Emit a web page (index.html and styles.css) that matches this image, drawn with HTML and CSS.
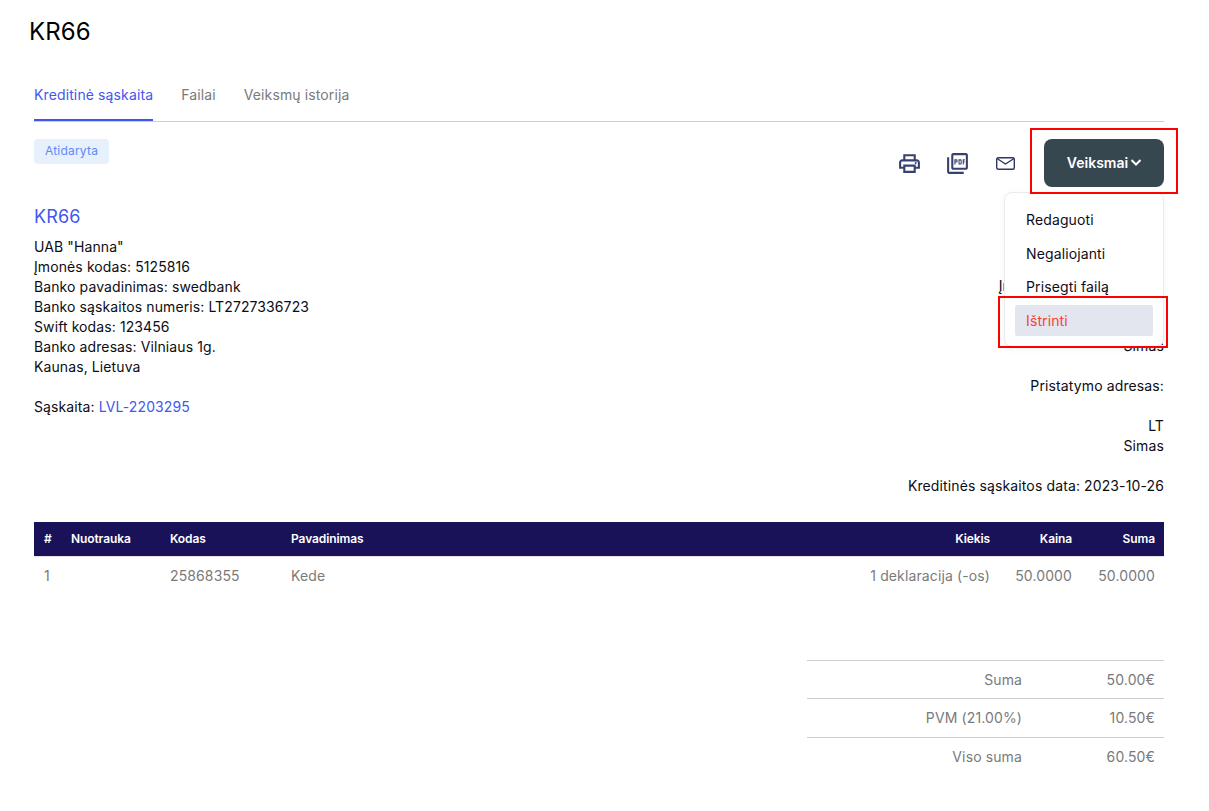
FILE: index.html
```html
<!DOCTYPE html>
<html lang="lt">
<head>
<meta charset="utf-8">
<title>KR66</title>
<link rel="stylesheet" href="styles.css">
</head>
<body>
<h1 class="page-title">KR66</h1>
<main class="content">
  <nav class="tabs">
    <a class="tab tab-active">Kreditinė sąskaita</a>
    <a class="tab">Failai</a>
    <a class="tab">Veiksmų istorija</a>
  </nav>

  <div class="toolbar">
    <span class="badge">Atidaryta</span>
    <div class="actions">
      <svg class="icon" viewBox="0 0 24 24"><path d="M19 8h-1V3H6v5H5c-1.66 0-3 1.34-3 3v6h4v4h12v-4h4v-6c0-1.66-1.34-3-3-3zM8 5h8v3H8V5zm8 12v2H8v-4h8v2zm2-2v-2H6v2H4v-4c0-.55.45-1 1-1h14c.55 0 1 .45 1 1v4h-2z"/><circle cx="18" cy="11.5" r="1"/></svg>
      <svg class="icon" viewBox="0 0 24 24"><path d="M20 2H8c-1.1 0-2 .9-2 2v12c0 1.1.9 2 2 2h12c1.1 0 2-.9 2-2V4c0-1.1-.9-2-2-2zm0 14H8V4h12v12zM4 6H2v14c0 1.1.9 2 2 2h14v-2H4V6zm12 6V9c0-.55-.45-1-1-1h-2v5h2c.55 0 1-.45 1-1zm-2-3h1v3h-1V9zm4 2h1v-1h-1V9h1V8h-2v5h1v-2zm-8 0h1c.55 0 1-.45 1-1V9c0-.55-.45-1-1-1H9v5h1v-2zm0-2h1v1h-1V9z"/></svg>
      <svg class="icon-mail" viewBox="0 0 19 13"><rect x=".7" y=".7" width="17.6" height="11.6" rx="1.5"/><path d="M1 1.500l8.500 5.500L18 1.500"/></svg>
      <div class="menu-anchor">
        <button class="menu-button" type="button">Veiksmai<svg class="chevron" viewBox="0 0 14 14"><path d="M2.500 4l4.500 4.500L11.500 4"/></svg></button>
        <span class="callout callout-button"></span>
        <div class="menu">
          <a class="menu-item">Redaguoti</a>
          <a class="menu-item">Negaliojanti</a>
          <a class="menu-item">Prisegti failą</a>
          <a class="menu-item menu-item-danger">Ištrinti</a>
        </div>
        <span class="callout callout-delete"></span>
      </div>
    </div>
  </div>

  <section class="details">
    <div class="seller">
      <h2 class="doc-number">KR66</h2>
      <p class="lines">UAB "Hanna"<br>Įmonės kodas: 5125816<br>Banko pavadinimas: swedbank<br>Banko sąskaitos numeris: LT2727336723<br>Swift kodas: 123456<br>Banko adresas: Vilniaus 1g.<br>Kaunas, Lietuva<br><br>Sąskaita: <a class="link">LVL-2203295</a></p>
    </div>
    <div class="buyer">
      <p class="lines">Įmonės kodas: 511581611<br><br><br>Simas<br><br>Pristatymo adresas:<br><br>LT<br>Simas<br><br>Kreditinės sąskaitos data: 2023-10-26</p>
    </div>
  </section>

  <table class="items">
    <colgroup>
      <col class="col-num"><col class="col-photo"><col class="col-code"><col><col class="col-qty"><col class="col-price"><col class="col-sum">
    </colgroup>
    <thead>
      <tr><th>#</th><th>Nuotrauka</th><th>Kodas</th><th>Pavadinimas</th><th class="num">Kiekis</th><th class="num">Kaina</th><th class="num">Suma</th></tr>
    </thead>
    <tbody>
      <tr><td>1</td><td></td><td>25868355</td><td>Kede</td><td class="num">1 deklaracija (-os)</td><td class="num">50.0000</td><td class="num">50.0000</td></tr>
    </tbody>
  </table>

  <table class="totals">
    <colgroup><col><col class="col-total"></colgroup>
    <tbody>
      <tr><td>Suma</td><td>50.00€</td></tr>
      <tr><td>PVM (21.00%)</td><td>10.50€</td></tr>
      <tr><td>Viso suma</td><td>60.50€</td></tr>
    </tbody>
  </table>
</main>
</body>
</html>
```

FILE: styles.css
```css
* { box-sizing: border-box; }
html, body { margin: 0; padding: 0; background: #fff; }
body {
  font-family: Inter, "Liberation Sans", sans-serif;
  font-size: 14px;
  line-height: 20px;
  letter-spacing: .12px;
  color: #0d0d14;
}
.page-title {
  margin: 0;
  padding: 17px 0 0 29px;
  font-size: 24px;
  line-height: 30px;
  font-weight: 400;
  color: #000;
}
.content { margin: 0 45px 0 34px; }
.tabs {
  display: flex;
  gap: 28px;
  margin-top: 26px;
  border-bottom: 1px solid #cfcfcf;
}
.tab {
  display: block;
  height: 48px;
  padding-top: 12px;
  color: #7a7a7a;
  font-weight: 400;
}
.tab-active {
  color: #4258ee;
  border-bottom: 2px solid #3f56ee;
  margin-bottom: -1px;
}
.toolbar {
  display: flex;
  justify-content: space-between;
  align-items: flex-start;
  padding-top: 17px;
}
.badge {
  display: block;
  height: 25px;
  padding: 3px 11px;
  border-radius: 4px;
  background: #e7f0fd;
  color: #5f8af7;
  font-size: 12px;
  line-height: 18px;
  letter-spacing: .2px;
}
.actions {
  display: flex;
  align-items: center;
  gap: 23px;
}
.icon { width: 25px; height: 25px; fill: #37406f; display: block; }
.icon-mail {
  display: block;
  width: 19px;
  height: 13px;
  margin: 0 3px;
  fill: none;
  stroke: #2b3566;
  stroke-width: 1.4;
}
.menu-anchor { position: relative; margin-left: 3px; }
.menu-button {
  display: flex;
  align-items: center;
  justify-content: center;
  gap: 1px;
  width: 120px;
  height: 48px;
  padding: 0 0 0 2px;
  border: 0;
  border-radius: 8px;
  background: #37474f;
  color: #fff;
  font: 600 14px/20px Inter, "Liberation Sans", sans-serif;
}
.chevron { width: 14px; height: 14px; fill: none; stroke: #fff; stroke-width: 2; }
.menu {
  position: absolute;
  z-index: 2;
  top: 53px;
  right: 0;
  width: 160px;
  height: 155px;
  padding: 11px 10px;
  background: #fff;
  border: 1px solid #e9ecef;
  border-radius: 8px;
  box-shadow: 0 2px 8px rgba(0, 0, 0, .05);
}
.menu-item {
  display: block;
  height: 33px;
  padding: 6px 11px 0;
  border-radius: 2px;
  color: #0d0d20;
}
.menu-item:first-child { height: 34px; }
.menu-item-danger {
  height: 31px;
  margin-top: 1px;
  padding: 6px 11px 0;
  background: #e3e6ef;
  color: #f44336;
}
.callout { position: absolute; z-index: 3; border: 2px solid #f00; pointer-events: none; }
.callout-button { top: -11px; left: -14px; width: 148px; height: 66px; }
.callout-delete { top: 157px; left: -46px; width: 170px; height: 52px; }
.details {
  display: flex;
  justify-content: space-between;
  margin-top: 19px;
}
.doc-number {
  margin: 0 0 9px;
  font-size: 18px;
  line-height: 22px;
  font-weight: 400;
  color: #4258ee;
}
.lines { margin: 0; }
.seller .lines { letter-spacing: .1px; }
.buyer { text-align: right; padding-top: 70px; }
.link { color: #4258ee; }
.items {
  width: 100%;
  margin-top: 26px;
  border-collapse: collapse;
  table-layout: fixed;
}
.col-num { width: 27px; }
.col-photo { width: 99px; }
.col-code { width: 121px; }
.col-qty { width: 150px; }
.col-price { width: 82px; }
.col-sum { width: 83px; }
.items th {
  height: 34px;
  padding: 0 9px 0 10px;
  background: #1a1259;
  border-bottom: 1px solid #e3e3e3;
  color: #fff;
  font-size: 12px;
  font-weight: 600;
  letter-spacing: -.1px;
  text-align: left;
}
.items td {
  height: 40px;
  padding: 0 9px 0 10px;
  color: #7a7a7a;
}
.items .num { text-align: right; padding-left: 0; }
.totals {
  width: 357px;
  margin: 64px 0 0 auto;
  border-collapse: collapse;
  table-layout: fixed;
}
.col-total { width: 133px; }
.totals td {
  height: 39px;
  padding: 0 9px 0 0;
  border-top: 1px solid #cfcfcf;
  color: #7a7a7a;
  text-align: right;
}
.totals tr:first-child td { height: 38px; }
```
